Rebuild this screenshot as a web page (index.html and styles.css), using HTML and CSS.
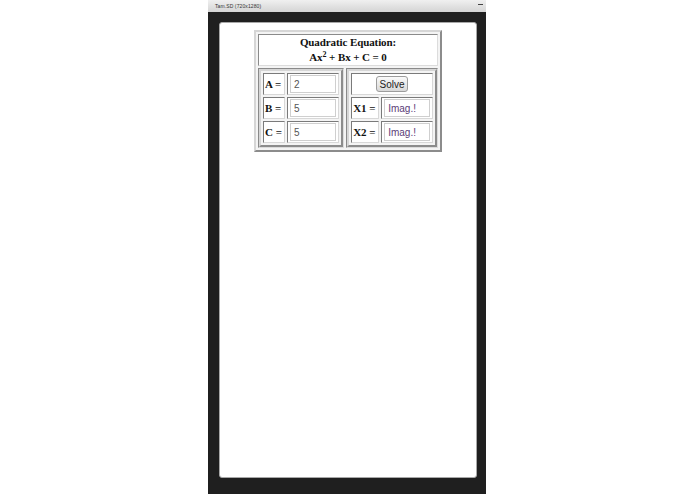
FILE: index.html
```html
<!DOCTYPE html>
<html>
<head>
<meta charset="utf-8">
<link rel="stylesheet" href="styles.css">
</head>
<body>
<div class="window">
  <div class="titlebar">
    <span class="title">Tam.SD (720x1280)</span>
    <span class="min"></span>
  </div>
  <div class="frame">
    <div class="screen">
      <table class="outer">
        <tr>
          <td colspan="2" class="head">Quadratic Equation:<br>Ax<sup>2</sup> + Bx + C = 0</td>
        </tr>
        <tr>
          <td class="half">
            <table class="inner">
              <tr><td class="lbl">A =</td><td class="fld"><input class="inp" value="2"></td></tr>
              <tr><td class="lbl">B =</td><td class="fld"><input class="inp" value="5"></td></tr>
              <tr><td class="lbl">C =</td><td class="fld"><input class="inp" value="5"></td></tr>
            </table>
          </td>
          <td class="half">
            <table class="inner">
              <tr><td colspan="2" class="solvecell"><button class="solve">Solve</button></td></tr>
              <tr><td class="lbl lblx">X1 =</td><td class="fld"><input class="inp res" value="Imag.!"></td></tr>
              <tr><td class="lbl lblx">X2 =</td><td class="fld"><input class="inp res" value="Imag.!"></td></tr>
            </table>
          </td>
        </tr>
      </table>
    </div>
  </div>
</div>
</body>
</html>
```

FILE: styles.css
```css
html, body {
  margin: 0;
  padding: 0;
  background: #ffffff;
}
.window {
  margin-left: 208px;
  width: 278px;
  height: 494px;
  display: flex;
  flex-direction: column;
}
.titlebar {
  height: 12px;
  background: linear-gradient(#f0f0f0, #d4d4d4);
  display: flex;
  align-items: center;
  justify-content: space-between;
  padding: 0 3px 0 7px;
  box-sizing: border-box;
}
.title {
  font-family: "Liberation Sans", Arial, sans-serif;
  font-size: 5px;
  color: #333;
  letter-spacing: 0.1px;
}
.min {
  width: 5px;
  height: 1px;
  background: #444;
  margin-top: -3px;
}
.frame {
  flex: 1;
  background: #1f1f1f;
  padding: 10px 9px 16px 11px;
  display: flex;
}
.screen {
  flex: 1;
  background: #ffffff;
  border: 1px solid #a8a8a8;
  border-radius: 3px;
  padding-top: 7px;
  display: flex;
  flex-direction: column;
  align-items: center;
}
.outer {
  border: 2px solid;
  border-color: #d6d6d6 #8c8c8c #8c8c8c #d6d6d6;
  background: #f4f4f4;
  border-spacing: 2px;
  width: 188px;
  font-family: "Liberation Serif", "Times New Roman", serif;
  font-weight: bold;
  font-size: 11px;
  color: #111;
}
.outer td {
  border: 1px solid;
  border-color: #8a8a8a #dcdcdc #dcdcdc #8a8a8a;
  background: #fff;
  padding: 0;
}
.head {
  text-align: center;
  height: 30px;
  line-height: 15px;
  font-size: 11px;
  letter-spacing: -0.1px;
}
.head sup {
  font-size: 8px;
  line-height: 0;
  vertical-align: 4px;
}
.outer td.half {
  vertical-align: top;
  background: #f4f4f4;
}
.inner {
  border: 2px solid;
  border-color: #d6d6d6 #8c8c8c #8c8c8c #d6d6d6;
  background: #f4f4f4;
  border-spacing: 2px;
  width: 100%;
}
.inner td {
  height: 20px;
  border: 1px solid;
  border-color: #7a7a7a #d8d8d8 #d8d8d8 #7a7a7a;
  background: #fff;
  padding: 0;
}
.lbl {
  width: 18px;
  padding: 0 1px !important;
  white-space: nowrap;
  font-size: 11px;
}
.lblx {
  width: 24px;
}
.fld {
  padding: 0 2px !important;
}
.inp {
  display: block;
  box-sizing: border-box;
  width: 100%;
  height: 18px;
  border: 1px solid #cfcfcf;
  outline: none;
  padding: 0 3px;
  margin: 0;
  font-family: "Liberation Sans", Arial, sans-serif;
  font-size: 10px;
  color: #555;
  background: #fff;
}
.res {
  color: #5b3d78;
}
.solvecell {
  text-align: center;
}
.solve {
  width: 32px;
  height: 16px;
  padding: 0;
  margin: 0;
  border: 1px solid #9c9c9c;
  border-radius: 3px;
  background: linear-gradient(#fafafa, #d8d8d8);
  font-family: "Liberation Sans", Arial, sans-serif;
  font-size: 10px;
  color: #222;
}
```
